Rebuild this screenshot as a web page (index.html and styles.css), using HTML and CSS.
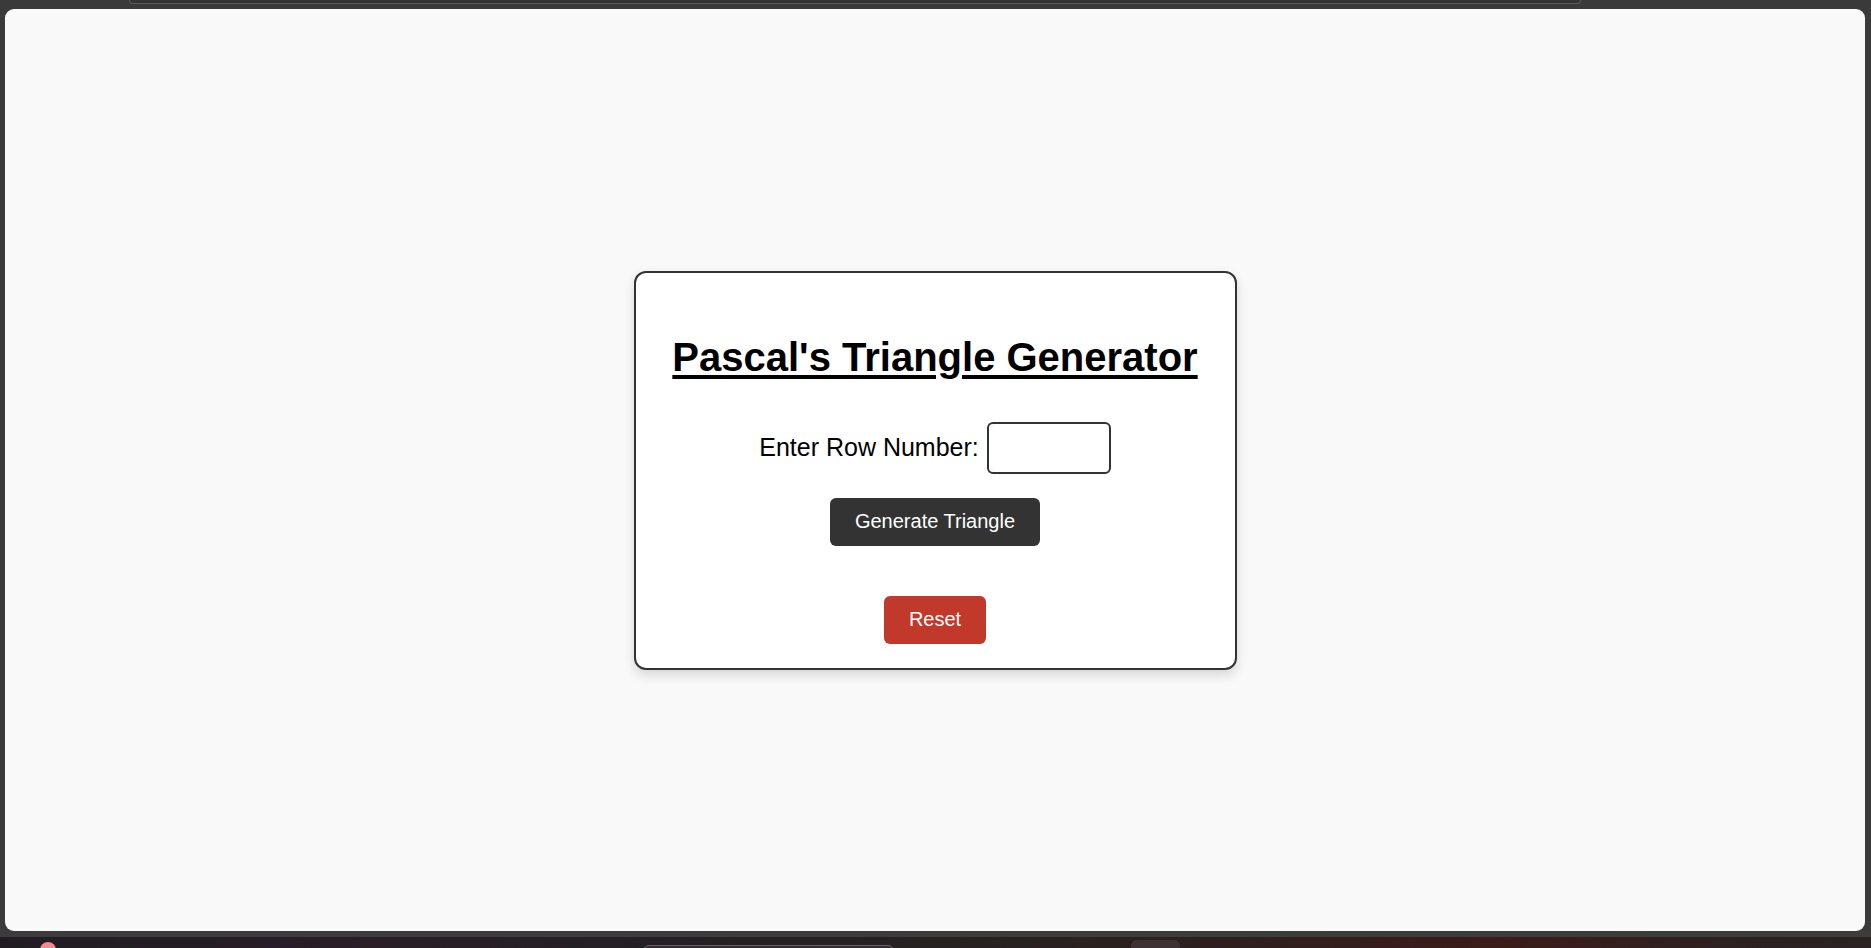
FILE: index.html
```html
<!DOCTYPE html>
<html lang="en">
<head>
<meta charset="utf-8">
<title>Pascal's Triangle Generator</title>
<link rel="stylesheet" href="styles.css">
</head>
<body>
<div class="topbar"><div class="tabstrip"></div></div>
<main class="viewport">
  <section class="card">
    <h1 class="title">Pascal's Triangle Generator</h1>
    <div class="row">
      <label class="label" for="rows">Enter Row Number:</label>
      <input class="input" id="rows" type="number">
    </div>
    <button class="btn btn-dark" type="button">Generate Triangle</button>
    <div class="output"></div>
    <button class="btn btn-red" type="button">Reset</button>
  </section>
</main>
<div class="band"></div>
<div class="taskbar">
  <span class="tb-dot"></span>
  <span class="tb-pill"></span>
  <span class="tb-square"></span>
</div>
</body>
</html>
```

FILE: styles.css
```css
html, body {
  margin: 0;
  padding: 0;
}
body {
  width: 1871px;
  height: 948px;
  overflow: hidden;
  background: #3a3a3a;
  display: flex;
  flex-direction: column;
  font-family: "Liberation Sans", Arial, sans-serif;
}
.topbar {
  height: 9px;
  flex: none;
  padding-left: 129px;
  box-sizing: border-box;
}
.tabstrip {
  width: 1450px;
  height: 3px;
  background: #333333;
  border: 1px solid #5b5b5b;
  border-top: none;
  border-radius: 0 0 10px 10px;
}
.viewport {
  flex: 1;
  margin: 0 6px 0 5px;
  background: #f9f9f9;
  border-radius: 9px;
  display: flex;
  align-items: center;
  justify-content: center;
}
.card {
  width: 603px;
  box-sizing: border-box;
  background: #ffffff;
  border: 2px solid #333333;
  border-radius: 12px;
  box-shadow: 0 5px 12px rgba(0, 0, 0, 0.14);
  padding: 25px 20px 24px;
  display: flex;
  flex-direction: column;
  align-items: center;
  text-align: center;
}
.title {
  margin: 36px 0 42px;
  font-size: 40px;
  font-weight: 700;
  line-height: 46px;
  color: #000;
  white-space: nowrap;
  text-decoration: underline;
  text-decoration-thickness: 4px;
  text-underline-offset: 4px;
}
.row {
  display: flex;
  align-items: center;
  gap: 8px;
}
.label {
  font-size: 25px;
  color: #000;
  white-space: nowrap;
}
.input {
  width: 124px;
  height: 52px;
  box-sizing: border-box;
  border: 2px solid #333333;
  border-radius: 6px;
  background: #fff;
  font-size: 20px;
  padding: 0 8px;
  margin: 0;
}
.btn {
  font-family: "Liberation Sans", Arial, sans-serif;
  font-size: 20px;
  line-height: 23px;
  color: #ffffff;
  border: none;
  border-radius: 6px;
  padding: 12.5px 25px;
  margin: 0;
  white-space: nowrap;
  cursor: pointer;
}
.btn-dark {
  background: #333333;
  margin-top: 24px;
}
.output {
  height: 0;
}
.btn-red {
  background: #c0392b;
  margin-top: 50px;
}
.band {
  height: 6px;
  flex: none;
  background: #3c3c3c;
}
.taskbar {
  height: 11px;
  flex: none;
  overflow: hidden;
  background: linear-gradient(90deg, #201d21 0%, #271d28 15%, #2a1f27 20%, #232023 35%, #262222 50%, #2d1f1f 65%, #3b1c19 80%, #2d2121 92%, #2a2223 100%);
  display: flex;
  align-items: flex-start;
}
.tb-dot {
  width: 16px;
  height: 16px;
  border-radius: 50%;
  background: #f08a98;
  margin: 5px 0 0 40px;
}
.tb-pill {
  width: 251px;
  height: 12px;
  box-sizing: border-box;
  border: 1px solid #6a6266;
  border-radius: 6px 6px 0 0;
  background: #322c30;
  margin: 8px 0 0 587px;
}
.tb-square {
  width: 49px;
  height: 14px;
  border-radius: 6px 6px 0 0;
  background: #3e3234;
  margin: 3px 0 0 237px;
}
```
